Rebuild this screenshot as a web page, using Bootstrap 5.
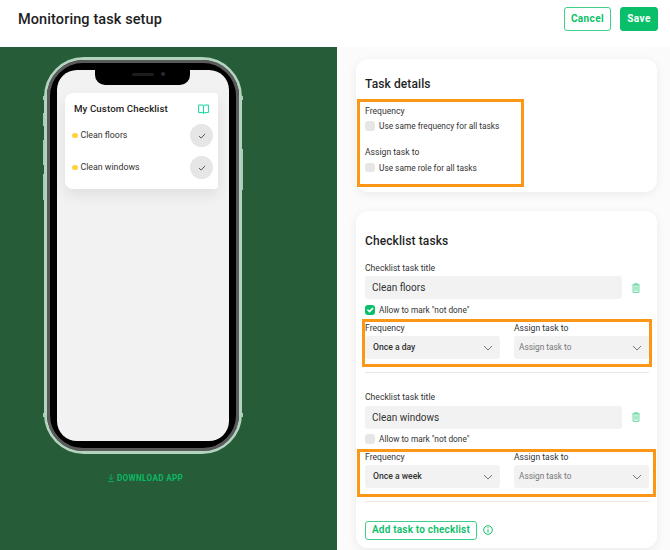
<!DOCTYPE html>
<html lang="en">
<head>
    <meta charset="UTF-8">
    <meta name="viewport" content="width=device-width, initial-scale=1.0">
    <title>Monitoring task setup</title>
    <link href="https://cdn.jsdelivr.net/npm/bootstrap@5.3.0/dist/css/bootstrap.min.css" rel="stylesheet">
    <style>
        html, body { height: 550px; overflow: hidden; }
        body { font-family: Roboto, Inter, sans-serif; color: #222; background: #fbfbfb; font-size: 9px; }
        .top-bar { height: 47px; background: #fff; padding: 7px 12px 0 18px; flex: none; box-shadow: 0 1px 3px rgba(0,0,0,.03); }
        .page-title { font-size: 14.5px; font-weight: 500; margin: 0; color: #1e1e1e; line-height: 25px; letter-spacing: .1px; }
        .btn-outline-mint, .btn-mint { font-size: 10px; font-weight: 700; letter-spacing: .4px; height: 24px; padding: 0; border-radius: 3px; line-height: 20px; }
        .btn-outline-mint { border: 1px solid #3fcf8a; color: #0abf69; background: #fff; width: 47px; }
        .btn-mint { border: 1px solid #0abf69; background: #0abf69; color: #fff; width: 38px; }
        .btn-row { gap: 9px; }
        .main-area { height: 503px; }
        .green-side { width: 337px; background: #265c38; flex: none; position: relative; }
        .phone-wrap { position: absolute; left: 44px; top: 10px; width: 198px; height: 397px; }
        .phone-shell { width: 198px; height: 397px; border-radius: 40px; background: #000; border: 3px solid #b3d5c0; }
        .phone-rim { width: 100%; height: 100%; border-radius: 36px; background: #000; border: 3px solid #5a5a5a; padding: 7px; }
        .phone-screen { width: 100%; height: 100%; border-radius: 20px; background: #f2f2f2; position: relative; }
        .phone-notch { position: absolute; left: 38px; top: 0; width: 95px; height: 15px; background: #000; border-radius: 0 0 10px 10px; }
        .phone-speaker { position: absolute; left: 37px; top: 2.5px; width: 22px; height: 3px; background: #1d1d1d; border-radius: 2px; }
        .phone-cam { position: absolute; left: 66px; top: 2px; width: 4px; height: 4px; background: #252a35; border-radius: 50%; }
        .side-key { position: absolute; width: 2px; background: #a9cdb7; }
        .phone-card { position: absolute; left: 8px; top: 23px; width: 153px; height: 96px; background: #fff; border-radius: 8px 4px 4px 8px; box-shadow: 0 6px 14px rgba(0,0,0,.08); padding: 9px 5px 0 7px; }
        .phone-card-title { font-size: 9.7px; font-weight: 500; color: #222; padding-left: 2px; height: 14px; letter-spacing: .1px; }
        .phone-row { font-size: 8.8px; color: #333; height: 23px; margin-top: 9px; }
        .phone-card-title + .phone-row { margin-top: 8px; }
        .y-dot { width: 5.5px; height: 5.5px; background: #ffd23f; border-radius: 50%; margin-right: 3px; }
        .tick-circle { width: 23px; height: 23px; background: #e6e6e6; border-radius: 50%; }
        .dl-link { position: absolute; left: 108px; top: 425px; color: #0cb765; font-size: 8.2px; font-weight: 700; letter-spacing: .3px; gap: 3px; }
        .right-side { flex: 1; padding: 12px 13px 0 19px; background: #fbfbfb; }
        .pane { background: #fff; border-radius: 12px; box-shadow: 0 2px 10px rgba(0,0,0,.07); padding: 0 8px 0 9px; position: relative; }
        .pane-one { height: 133px; padding-top: 18px; }
        .pane-two { height: 337px; margin-top: 19px; padding-top: 23px; }
        .pane-title { font-size: 12px; font-weight: 500; color: #1f1f1f; margin: 0; line-height: 14px; letter-spacing: .1px; }
        .lbl { font-size: 8.6px; color: #333; line-height: 11px; margin: 0; display: block; }
        .chk-row { height: 14px; color: #333; margin: 0; padding: 0; min-height: 0; }
        .chk-row .form-check-input { width: 9.5px; height: 9.5px; margin: 0 4.500px 0 0; background-color: #e6e6e6; border: 0; border-radius: 3px; float: none; flex: none; }
        .chk-row .form-check-input:checked { background-color: #0abf69; }
        .chk-row .form-check-label { font-size: 8.3px; line-height: 14px; }
        .mark-a, .mark-b, .mark-c { position: absolute; border: 3px solid #fb9616; pointer-events: none; }
        .mark-a { left: 1px; top: 40px; width: 167px; height: 88px; }
        .mark-b { left: 6px; top: 108px; width: 290px; height: 48px; }
        .mark-c { left: 1px; top: 238px; width: 299px; height: 48px; }
        .txt-in { background: #f2f2f2; border: 0; border-radius: 3px; height: 23px; font-size: 10px; padding: 0 7px; color: #333; width: 257px; min-height: 0; }
        .sel-in { background-color: #f2f2f2; border: 0; border-radius: 3px; height: 23px; min-height: 0; font-size: 8.6px; font-weight: 500; padding: 0 8px; width: 135px; color: #333; background-position: right 7px center; background-size: 10px 10px; background-image: url("data:image/svg+xml,%3csvg xmlns='http://www.w3.org/2000/svg' viewBox='0 0 10 10'%3e%3cpath fill='none' stroke='%23555' stroke-width='.8' d='M1 3l4 4 4-4'/%3e%3c/svg%3e"); }
        .sel-in.empty { color: #777; font-weight: 400; padding-left: 5px; font-size: 8.3px; }
        .sel-pair { gap: 14px; }
        .sel-pair .lbl { margin-bottom: 2.500px; }
        .sep { height: 1px; background: #e8e8e8; width: 284px; margin-top: 13px; }
        .trash-ico { margin-left: 9.5px; }
        .btn-add { font-size: 10px; font-weight: 600; letter-spacing: .2px; color: #0abf69; border: 1px solid #3fcf8a; border-radius: 3px; background: #fff; height: 19px; width: 112px; padding: 0; line-height: 16px; white-space: nowrap; }
    </style>
</head>
<body>
    <div class="d-flex flex-column">
        <!-- header -->
        <div class="top-bar d-flex align-items-start justify-content-between">
            <h1 class="page-title">Monitoring task setup</h1>
            <div class="d-flex btn-row">
                <button class="btn btn-outline-mint">Cancel</button>
                <button class="btn btn-mint">Save</button>
            </div>
        </div>

        <div class="main-area d-flex">
            <!-- phone preview -->
            <div class="green-side">
                <div class="phone-wrap">
                    <span class="side-key" style="left:-1px;top:56px;height:13px"></span>
                    <span class="side-key" style="left:-1px;top:83px;height:25px"></span>
                    <span class="side-key" style="left:-1px;top:117px;height:26px"></span>
                    <span class="side-key" style="left:197px;top:92px;height:41px"></span>
                    <span class="side-key" style="left:-1px;top:39px;height:4px"></span>
                    <span class="side-key" style="left:197px;top:39px;height:4px"></span>
                    <span class="side-key" style="left:-1px;top:356px;height:4px"></span>
                    <span class="side-key" style="left:197px;top:356px;height:4px"></span>
                    <div class="phone-shell">
                        <div class="phone-rim">
                            <div class="phone-screen">
                                <div class="phone-notch">
                                    <span class="phone-speaker"></span>
                                    <span class="phone-cam"></span>
                                </div>
                                <div class="phone-card">
                                    <div class="phone-card-title d-flex justify-content-between align-items-center">
                                        <span>My Custom Checklist</span>
                                        <svg class="me-1" width="11" height="10" viewBox="0 0 11 10" fill="none" stroke="#12d6a0" stroke-width="1"><path d="M.6 1h3.600c.8 0 1.300.5 1.300 1.200V9.600c0-.6-.5-1-1.200-1H.6zM10.400 1H6.800c-.8 0-1.300.5-1.300 1.200V9.600c0-.6.5-1 1.200-1h3.700z"/></svg>
                                    </div>
                                    <div class="phone-row d-flex align-items-center">
                                        <span class="y-dot"></span><span class="flex-grow-1">Clean floors</span>
                                        <span class="tick-circle d-flex align-items-center justify-content-center"><svg width="8" height="6" viewBox="0 0 9 7" fill="none" stroke="#444" stroke-width="1"><path d="M1 3.500l2.500 2.500L8 1"/></svg></span>
                                    </div>
                                    <div class="phone-row d-flex align-items-center">
                                        <span class="y-dot"></span><span class="flex-grow-1">Clean windows</span>
                                        <span class="tick-circle d-flex align-items-center justify-content-center"><svg width="8" height="6" viewBox="0 0 9 7" fill="none" stroke="#444" stroke-width="1"><path d="M1 3.500l2.500 2.500L8 1"/></svg></span>
                                    </div>
                                </div>
                            </div>
                        </div>
                    </div>
                </div>
                <div class="dl-link d-flex align-items-center">
                    <svg width="6" height="8" viewBox="0 0 6 8" fill="none" stroke="#0cb765" stroke-width=".8"><path d="M3 0v5.500M.8 3.500L3 5.700l2.200-2.200M0 7.500h6"/></svg>
                    <span>DOWNLOAD APP</span>
                </div>
            </div>

            <!-- form -->
            <div class="right-side">
                <div class="pane pane-one">
                    <h2 class="pane-title">Task details</h2>
                    <div class="mark-a"></div>
                    <label class="lbl" style="margin-top:14.500px">Frequency</label>
                    <div class="form-check chk-row d-flex align-items-center" style="margin-top:2.500px">
                        <input class="form-check-input" type="checkbox" id="c1">
                        <label class="form-check-label" for="c1">Use same frequency for all tasks</label>
                    </div>
                    <label class="lbl" style="margin-top:13.500px">Assign task to</label>
                    <div class="form-check chk-row d-flex align-items-center" style="margin-top:3px">
                        <input class="form-check-input" type="checkbox" id="c2">
                        <label class="form-check-label" for="c2">Use same role for all tasks</label>
                    </div>
                </div>

                <div class="pane pane-two">
                    <h2 class="pane-title">Checklist tasks</h2>
                    <div class="mark-b"></div>
                    <div class="mark-c"></div>

                    <label class="lbl" style="margin-top:14.500px">Checklist task title</label>
                    <div class="d-flex align-items-center" style="margin-top:2.500px">
                        <input class="form-control txt-in" type="text" value="Clean floors">
                        <svg class="trash-ico" width="8" height="10" viewBox="0 0 8 10" fill="#d6f5e6" stroke="#6fdaa6" stroke-width=".9"><path d="M.5 1.800h7M2.600 1.800V.6h2.800v1.200M1 1.800v7.700h6V1.800zM3 3.500v4M5 3.500v4"/></svg>
                    </div>
                    <div class="form-check chk-row d-flex align-items-center" style="margin-top:4px">
                        <input class="form-check-input" type="checkbox" id="c3" checked>
                        <label class="form-check-label" for="c3">Allow to mark "not done"</label>
                    </div>
                    <div class="d-flex sel-pair" style="margin-top:5.500px">
                        <div><label class="lbl">Frequency</label>
                            <select class="form-select sel-in"><option>Once a day</option></select></div>
                        <div><label class="lbl">Assign task to</label>
                            <select class="form-select sel-in empty"><option>Assign task to</option></select></div>
                    </div>
                    <div class="sep"></div>

                    <label class="lbl" style="margin-top:18.500px">Checklist task title</label>
                    <div class="d-flex align-items-center" style="margin-top:3px">
                        <input class="form-control txt-in" type="text" value="Clean windows">
                        <svg class="trash-ico" width="8" height="10" viewBox="0 0 8 10" fill="#d6f5e6" stroke="#6fdaa6" stroke-width=".9"><path d="M.5 1.800h7M2.600 1.800V.6h2.800v1.200M1 1.800v7.700h6V1.800zM3 3.500v4M5 3.500v4"/></svg>
                    </div>
                    <div class="form-check chk-row d-flex align-items-center" style="margin-top:3.500px">
                        <input class="form-check-input" type="checkbox" id="c4">
                        <label class="form-check-label" for="c4">Allow to mark "not done"</label>
                    </div>
                    <div class="d-flex sel-pair" style="margin-top:5.500px">
                        <div><label class="lbl">Frequency</label>
                            <select class="form-select sel-in"><option>Once a week</option></select></div>
                        <div><label class="lbl">Assign task to</label>
                            <select class="form-select sel-in empty"><option>Assign task to</option></select></div>
                    </div>
                    <div class="sep"></div>

                    <div class="d-flex align-items-center" style="margin-top:18.500px;gap:6px">
                        <button class="btn btn-add">Add task to checklist</button>
                        <svg width="10" height="10" viewBox="0 0 10 10" fill="none" stroke="#0abf69" stroke-width="1"><circle cx="5" cy="5" r="4.300"/><path d="M5 4.300V7.500M5 2.300v1"/></svg>
                    </div>
                </div>
            </div>
        </div>
    </div>

    <script src="https://cdn.jsdelivr.net/npm/bootstrap@5.3.0/dist/js/bootstrap.bundle.min.js"></script>
</body>
</html>
